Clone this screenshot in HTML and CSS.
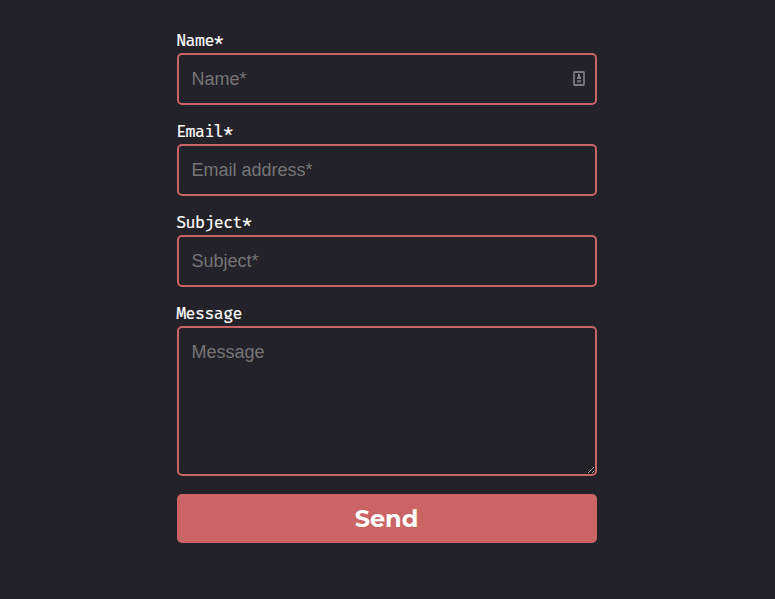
FILE: index.html
```html
<!DOCTYPE html>
<html lang="en">
<head>
<meta charset="utf-8">
<title>Contact</title>
<link rel="stylesheet" href="styles.css">
</head>
<body>
<form class="contact">
  <div class="field">
    <label for="name">Name*</label>
    <div class="input-wrap">
      <input id="name" type="text" placeholder="Name*">
      <svg class="autofill" viewBox="0 0 12 15" aria-hidden="true">
        <rect x="1" y="1" width="10" height="13" rx=".6" fill="none" stroke="#79787d" stroke-width="1.8"/>
        <path d="M5 3h2v2.500l1 1V8H4V6.500l1-1z" fill="#86858a"/>
        <path d="M4 9h4v2.500H4z" fill="#6a696e"/>
      </svg>
    </div>
  </div>
  <div class="field">
    <label for="email">Email*</label>
    <input id="email" type="email" placeholder="Email address*">
  </div>
  <div class="field">
    <label for="subject">Subject*</label>
    <input id="subject" type="text" placeholder="Subject*">
  </div>
  <div class="field">
    <label for="message">Message</label>
    <textarea id="message" placeholder="Message"></textarea>
  </div>
  <button type="submit">Send</button>
</form>
</body>
</html>
```
FILE: styles.css
```css
* {
  box-sizing: border-box;
}

body {
  margin: 0;
  min-height: 100vh;
  background: #232228;
}

.contact {
  display: flex;
  flex-direction: column;
  gap: 18px;
  width: 420px;
  margin-left: 177px;
  padding-top: 32px;
}

.field {
  display: flex;
  flex-direction: column;
}

label {
  height: 21px;
  margin-left: -0.8px;
  color: #fff;
  font: 16.2px/19px "Fira Code", "Fira Mono", "DejaVu Sans Mono", monospace;
  letter-spacing: -0.56px;
  -webkit-text-stroke: 0.2px #fff;
}

.input-wrap {
  position: relative;
}

input,
textarea {
  display: block;
  width: 100%;
  margin: 0;
  border: 2px solid #c96469;
  border-radius: 5px;
  background: transparent;
  color: #fff;
  font: 18px/21px "Liberation Sans", Arial, sans-serif;
}

input {
  height: 52px;
  padding: 0 12.500px;
}

textarea {
  height: 150px;
  padding: 14px 12.500px;
  resize: vertical;
}

::placeholder {
  color: #757575;
  opacity: 1;
}

.autofill {
  position: absolute;
  top: 18px;
  right: 12px;
  width: 12px;
  height: 15px;
}

button {
  height: 49px;
  padding: 0 1px 0 0;
  border: 0;
  border-radius: 5px;
  background: #cb6465;
  color: #fff;
  font: 700 24px/49px Montserrat, Inter, sans-serif;
}
```
